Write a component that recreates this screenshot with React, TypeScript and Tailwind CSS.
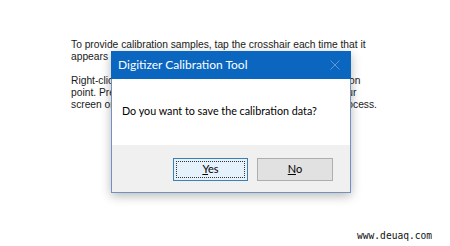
export default function App() {
    return (
        <div className="relative w-[450px] h-[246px] overflow-hidden bg-white">
            <div className="pl-[71px] pt-[39px] text-[10.25px] leading-[12px] text-[#1a1a1a] whitespace-nowrap font-['Liberation_Sans',Arial,sans-serif]">
                <p>To provide calibration samples, tap the crosshair each time that it</p>
                <p>appears on the screen.</p>
                <p className="mt-[12px]">Right-click anywhere on the screen to go back to last calibration</p>
                <p>point. Press the Windows button on a tablet or Esc key on your</p>
                <p>screen or keyboard to close the tool and cancel calibration process.</p>
            </div>

            <div className="absolute left-[111px] top-[51px] w-[240px] h-[142px] flex flex-col border border-[#6f93bd] border-t-0 bg-white shadow-[0_3px_10px_rgba(0,0,0,0.28)] font-['Lato','Noto_Sans',sans-serif]">
                <div className="h-[28px] flex items-center justify-between bg-[#0b66bf] pl-[7px] pr-[11px] -mx-px">
                    <span className="text-[12px] text-white">Digitizer Calibration Tool</span>
                    <svg width="10" height="10" viewBox="0 0 10 10" className="text-[#5f97d6]">
                        <path d="M0.5 0.5 L9.5 9.5 M9.5 0.5 L0.5 9.5" stroke="currentColor" strokeWidth="1" />
                    </svg>
                </div>
                <div className="h-[66px] pl-[10px] pt-[25px] text-[10.75px] leading-[14px] text-black">
                    Do you want to save the calibration data?
                </div>
                <div className="flex-1 flex justify-end items-start gap-[9px] bg-[#f0f0f0] pt-[13px] pr-[17px] text-[11px] text-black">
                    <button className="relative w-[75px] h-[23px] border border-[#3c7fb1] bg-[#e5f1fb] flex items-center justify-center">
                        <span className="absolute inset-[2px] border border-dotted border-[#333]" />
                        <span><span className="underline">Y</span>es</span>
                    </button>
                    <button className="w-[76px] h-[23px] border border-[#adadad] bg-[#e1e1e1] flex items-center justify-center">
                        <span><span className="underline">N</span>o</span>
                    </button>
                </div>
            </div>

            <span className="absolute left-[357px] top-[230px] text-[9.6px] leading-[12px] text-[#111] font-['DejaVu_Sans_Mono',monospace]">www.deuaq.com</span>
        </div>
    )
}
